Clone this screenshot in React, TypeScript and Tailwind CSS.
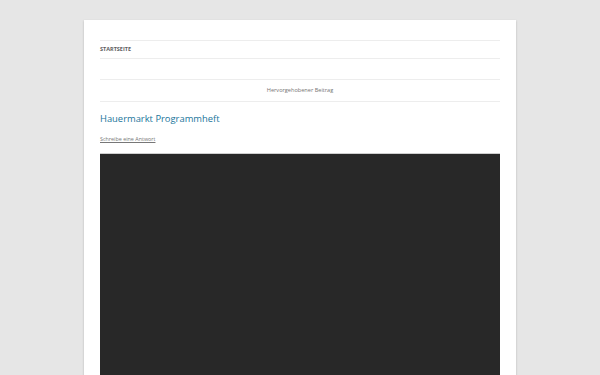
export default function App() {
	return (
		<div className="min-h-screen w-full bg-[#e6e6e6] pt-5 font-['Open_Sans',sans-serif] text-[#444]">
			<div className="mx-auto w-[432px] bg-white px-4 pt-5 shadow-[0_1px_2px_rgba(64,64,64,0.3)]">
				<nav className="border-y border-[#ededed] py-[6px]">
					<ul className="flex">
						<li className="text-[5.5px] font-bold uppercase leading-[5px] text-[#5e5e5e]">Startseite</li>
					</ul>
				</nav>
				<div className="mt-5 border-y border-[#ededed] py-[7px] text-center text-[5.6px] leading-[7px] text-[#757575]">
					Hervorgehobener Beitrag
				</div>
				<h1 className="mt-[10px] text-[9.4px] leading-[14px] text-[#21759b]">Hauermarkt Programmheft</h1>
				<a className="mt-[10px] block text-[5.4px] leading-[6px] text-[#777] underline">Schreibe eine Antwort</a>
				<div className="mt-[11px] h-[240px] border-t border-[#cfcfcf] bg-[#282828]" />
			</div>
		</div>
	);
}
